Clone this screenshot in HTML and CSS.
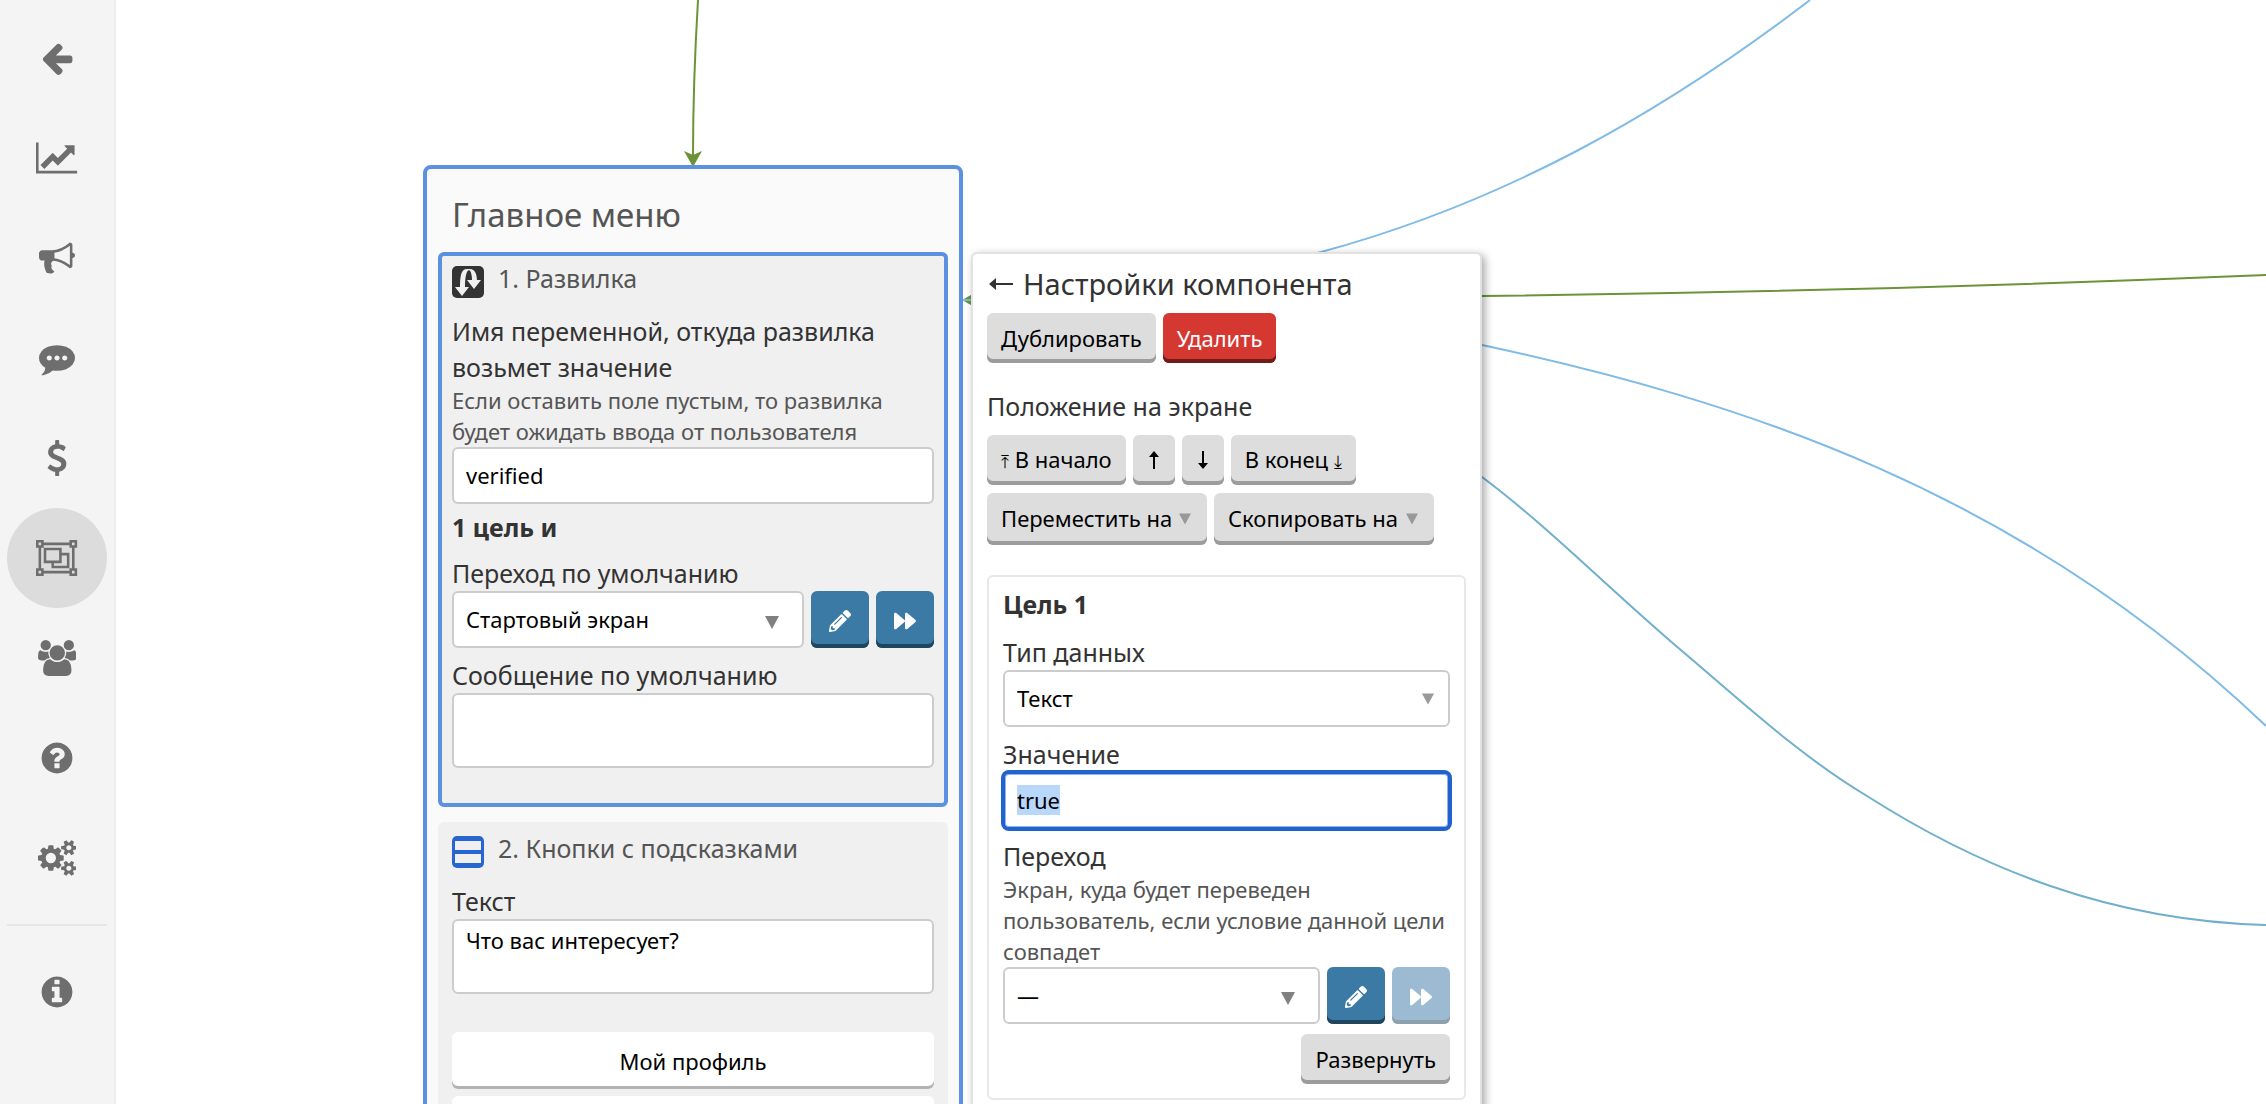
FILE: index.html
```html
<!DOCTYPE html>
<html lang="ru">
<head>
<meta charset="utf-8">
<meta name="viewport" content="width=device-width, initial-scale=1">
<title>Редактор экранов</title>
<link rel="stylesheet" href="styles.css">
</head>
<body>
<svg class="symbols" aria-hidden="true">
  <symbol id="pencil" viewBox="0 0 512 512"><path d="M497.9 142.1l-46.1 46.1c-4.7 4.7-12.3 4.7-17 0l-111-111c-4.7-4.7-4.7-12.3 0-17l46.1-46.1c18.7-18.7 49.1-18.7 67.9 0l60.1 60.1c18.8 18.7 18.8 49.1 0 67.9zM284.2 99.8L21.6 362.4.4 483.9c-2.9 16.4 11.4 30.6 27.8 27.8l121.5-21.3 262.6-262.6c4.7-4.7 4.7-12.3 0-17l-111-111c-4.8-4.7-12.4-4.7-17.1 0zM124.1 339.9c-5.5-5.5-5.5-14.3 0-19.8l154-154c5.5-5.5 14.3-5.5 19.8 0s5.5 14.3 0 19.8l-154 154c-5.5 5.5-14.3 5.5-19.8 0zM88 424h48v36.3l-64.5 11.3-31.1-31.1L51.7 376H88v48z"/></symbol>
  <symbol id="forward" viewBox="0 0 512 512"><path d="M500.5 231.4l-192-160C287.9 54.3 256 68.6 256 96v320c0 27.4 31.9 41.8 52.5 24.6l192-160c15.3-12.8 15.3-36.4 0-49.2zm-256 0l-192-160C31.9 54.3 0 68.6 0 96v320c0 27.4 31.9 41.8 52.5 24.6l192-160c15.3-12.8 15.3-36.4 0-49.2z"/></symbol>
  <symbol id="caret" viewBox="0 0 14 13"><path d="M0 0h14L7 13z"/></symbol>
</svg>
<div class="app">
  <nav class="sidebar" aria-label="Разделы">
    <a class="nav-item" href="#back" aria-label="Назад"><svg viewBox="0 0 1792 1792"><path d="M1664 896v128q0 53-32.5 90.5t-84.5 37.5h-704l293 294q38 36 38 90t-38 90l-75 76q-37 37-90 37-52 0-91-37l-651-652q-37-37-37-90 0-52 37-91l651-650q38-38 91-38 52 0 90 38l75 74q38 38 38 91t-38 91l-293 293h704q52 0 84.5 37.5t32.5 90.5z"/></svg></a>
    <a class="nav-item" href="#stats" aria-label="Статистика"><svg viewBox="0 0 2048 1792"><path d="M2048 1536v128h-2048v-1536h128v1408h1920zm-128-1248v435q0 21-19.5 29.5t-35.5-7.5l-121-121-633 633q-10 10-23 10t-23-10l-233-233-416 416-192-192 585-585q10-10 23-10t23 10l233 233 464-464-121-121q-16-16-7.5-35.5t29.5-19.5h435q14 0 23 9t9 23z"/></svg></a>
    <a class="nav-item" href="#mailings" aria-label="Рассылки"><svg viewBox="0 0 1792 1792"><path d="M1664 640q53 0 90.5 37.5t37.5 90.5-37.5 90.5-90.5 37.5v384q0 52-38 90t-90 38q-417-347-812-380-58 19-91 66t-31 100.5 40 92.5q-20 33-23 65.5t6 58 33.5 55 48 50 61.5 50.5q-29 58-111.5 83t-168.5 11.5-132-55.5q-7-23-29.5-87.5t-32-94.5-23-89-15-101 3.5-98.5 22-110.5h-122q-66 0-113-47t-47-113v-192q0-66 47-113t113-47h480q435 0 896-384 52 0 90 38t38 90v384zm-128 604v-954q-394 302-768 343v270q377 42 768 341z"/></svg></a>
    <a class="nav-item" href="#chats" aria-label="Чаты"><svg viewBox="0 0 1792 1792"><path d="M640 896q0-53-37.5-90.5t-90.5-37.5-90.5 37.5-37.5 90.5 37.5 90.5 90.5 37.5 90.5-37.5 37.5-90.5zm384 0q0-53-37.5-90.5t-90.5-37.5-90.5 37.5-37.5 90.5 37.5 90.5 90.5 37.5 90.5-37.5 37.5-90.5zm384 0q0-53-37.5-90.5t-90.5-37.5-90.5 37.5-37.5 90.5 37.5 90.5 90.5 37.5 90.5-37.5 37.5-90.5zm384 0q0 174-120 321.5t-326 233-450 85.5q-110 0-211-18-173 173-435 229-52 10-86 13-12 1-22-6t-13-18q-4-15 20-37 5-5 23.5-21.5t25.5-23.5 23.5-25.5 24-31.5 20.5-37 20-48 14.5-57.5 12.5-72.5q-146-90-229.5-216.5t-83.5-269.5q0-174 120-321.5t326-233 450-85.5 450 85.5 326 233 120 321.5z"/></svg></a>
    <a class="nav-item" href="#payments" aria-label="Платежи"><svg viewBox="0 0 1792 1792"><path d="M1362 1185q0 153-99.5 263.5t-258.5 136.5v175q0 14-9 23t-23 9h-135q-13 0-22.5-9.5t-9.5-22.5v-175q-66-9-127.5-31t-101.5-44.5-74-48-46.5-37.5-17.5-18q-17-21-2-41l103-135q7-10 23-12 15-2 24 9l2 2q113 99 243 125 37 8 74 8 81 0 142.5-43t61.5-122q0-28-15-53t-33.5-42-58.5-37.5-66-32-80-32.5q-39-16-61.5-25t-61.5-26.5-62.5-31-56.5-35.5-53.5-42.5-43.5-49-35.5-58-21-66.5-8.5-78q0-138 98-242t255-134v-180q0-13 9.5-22.5t22.5-9.5h135q14 0 23 9t9 23v176q57 6 110.5 23t87 33.5 63.5 37.5 39 29 15 14q17 18 5 38l-81 146q-8 15-23 16-14 3-27-7-3-3-14.5-12t-39-26.5-58.5-32-74.5-26-85.5-11.5q-95 0-155 43t-60 111q0 26 8.5 48t29.5 41.5 39.5 33 56 31 60.5 27 70 27.5q53 20 81 31.5t76 35 75.5 42.5 62 50 53 63.5 31.5 76.5 13 94z"/></svg></a>
    <a class="nav-item nav-item--active" href="#screens" aria-label="Экраны" aria-current="page"><svg viewBox="0 0 2048 1792"><path fill-rule="evenodd" d="M2048 384h-128v1024h128v384h-384v-128h-1280v128h-384v-384h128v-1024h-128v-384h384v128h1280v-128h384zM1792 128v128h128v-128zM128 128v128h128v-128zM256 1664v-128h-128v128zM1664 1536v-128h128v-1024h-128v-128h-1280v128h-128v1024h128v128zM1920 1664v-128h-128v128zM1280 640h384v768h-896v-256h-384v-768h896zM512 1024h640v-512h-640zM1536 1280v-512h-256v384h-384v128z"/></svg></a>
    <a class="nav-item" href="#users" aria-label="Пользователи"><svg viewBox="0 0 1920 1792"><path d="M593 896q-162 5-265 128h-134q-82 0-138-40.5t-56-118.5q0-353 124-353 6 0 43.5 21t97.5 42.5 119 21.5q67 0 133-23-5 37-5 66 0 139 81 256zm1071 637q0 120-73 189.5t-194 69.5h-874q-121 0-194-69.5t-73-189.5q0-53 3.5-103.5t14-109 26.5-108.5 43-97.5 62-81 85.5-53.5 111.5-20q10 0 43 21.5t73 48 107 48 135 21.5 135-21.5 107-48 73-48 43-21.5q61 0 111.5 20t85.5 53.5 62 81 43 97.5 26.5 108.5 14 109 3.5 103.5zm-1024-1277q0 106-75 181t-181 75-181-75-75-181 75-181 181-75 181 75 75 181zm704 384q0 159-112.5 271.5t-271.5 112.5-271.5-112.5-112.5-271.5 112.5-271.5 271.5-112.5 271.5 112.5 112.5 271.5zm576 225q0 78-56 118.5t-138 40.5h-134q-103-123-265-128 81-117 81-256 0-29-5-66 66 23 133 23 59 0 119-21.5t97.5-42.5 43.5-21q124 0 124 353zm-128-609q0 106-75 181t-181 75-181-75-75-181 75-181 181-75 181 75 75 181z"/></svg></a>
    <a class="nav-item" href="#help" aria-label="Помощь"><svg viewBox="0 0 1792 1792"><path d="M1024 1376v-192q0-14-9-23t-23-9h-192q-14 0-23 9t-9 23v192q0 14 9 23t23 9h192q14 0 23-9t9-23zm256-672q0-88-55.5-163t-138.5-116-170-41q-243 0-371 213-15 24 8 42l132 100q7 6 19 6 16 0 25-12 53-68 86-92 34-24 86-24 48 0 85.5 26t37.5 59q0 38-20 61t-68 45q-63 28-115.5 86.5t-52.5 125.5v36q0 14 9 23t23 9h192q14 0 23-9t9-23q0-19 21.5-49.5t54.5-49.5q32-18 49-28.5t46-35 44.5-48 28-60.5 12.5-81zm384 192q0 209-103 385.5t-279.5 279.5-385.5 103-385.5-103-279.5-279.5-103-385.5 103-385.5 279.5-279.5 385.5-103 385.5 103 279.5 279.5 103 385.5z"/></svg></a>
    <a class="nav-item" href="#settings" aria-label="Настройки"><svg viewBox="0 0 1920 1792"><path d="M896 896q0-106-75-181t-181-75-181 75-75 181 75 181 181 75 181-75 75-181zm768 512q0-52-38-90t-90-38-90 38-38 90q0 53 37.5 90.5t90.5 37.5 90.5-37.5 37.5-90.5zm0-1024q0-52-38-90t-90-38-90 38-38 90q0 53 37.5 90.5t90.5 37.5 90.5-37.5 37.5-90.5zm-384 421v185q0 10-7 19.5t-16 10.5l-155 24q-11 35-32 76 34 48 90 115 7 11 7 20 0 12-7 19-23 30-82.5 89.5t-78.5 59.5q-11 0-21-7l-115-90q-37 19-77 31-11 108-23 155-7 24-30 24h-186q-11 0-20-7.5t-10-17.5l-23-153q-34-10-75-31l-118 89q-7 7-20 7-11 0-21-8-144-133-144-160 0-9 7-19 10-14 41-53t47-61q-23-44-35-82l-152-24q-10-1-17-9.5t-7-19.5v-185q0-10 7-19.5t16-10.5l155-24q11-35 32-76-34-48-90-115-7-11-7-20 0-12 7-20 22-30 82-89t79-59q11 0 21 7l115 90q34-18 77-32 11-108 23-154 7-24 30-24h186q11 0 20 7.5t10 17.5l23 153q34 10 75 31l118-89q8-7 20-7 11 0 21 8 144 133 144 160 0 8-7 19-12 16-42 54t-45 60q23 48 34 82l152 23q10 2 17 10.5t7 19.5zm640 533v140q0 16-149 31-12 27-30 52 51 113 51 138 0 4-4 7-122 71-124 71-8 0-46-47t-52-68q-20 2-30 2t-30-2q-14 21-52 68t-46 47q-2 0-124-71-4-3-4-7 0-25 51-138-18-25-30-52-149-15-149-31v-140q0-16 149-31 13-29 30-52-51-113-51-138 0-4 4-7 4-2 35-20t59-34 30-16q8 0 46 46.5t52 67.5q20-2 30-2t30 2q51-71 92-112l6-2q4 0 124 70 4 3 4 7 0 25-51 138 17 23 30 52 149 15 149 31zm0-1024v140q0 16-149 31-12 27-30 52 51 113 51 138 0 4-4 7-122 71-124 71-8 0-46-47t-52-68q-20 2-30 2t-30-2q-14 21-52 68t-46 47q-2 0-124-71-4-3-4-7 0-25 51-138-18-25-30-52-149-15-149-31v-140q0-16 149-31 13-29 30-52-51-113-51-138 0-4 4-7 4-2 35-20t59-34 30-16q8 0 46 46.5t52 67.5q20-2 30-2t30 2q51-71 92-112l6-2q4 0 124 70 4 3 4 7 0 25-51 138 17 23 30 52 149 15 149 31z"/></svg></a>
    <hr class="nav-rule">
    <a class="nav-item" href="#about" aria-label="О сервисе"><svg viewBox="0 0 1792 1792"><path d="M1152 1376v-160q0-14-9-23t-23-9h-96v-512q0-14-9-23t-23-9h-320q-14 0-23 9t-9 23v160q0 14 9 23t23 9h96v320h-96q-14 0-23 9t-9 23v160q0 14 9 23t23 9h448q14 0 23-9t9-23zm-128-896v-160q0-14-9-23t-23-9h-192q-14 0-23 9t-9 23v160q0 14 9 23t23 9h192q14 0 23-9t9-23zm640 416q0 209-103 385.5t-279.5 279.5-385.5 103-385.5-103-279.5-279.5-103-385.5 103-385.5 279.5-279.5 385.5-103 385.5 103 279.5 279.5 103 385.5z"/></svg></a>
  </nav>

  <main class="canvas">
    <svg class="edges" aria-hidden="true">
      <g transform="translate(-116 0)">
        <path class="edge edge--green" d="M698 0C695 50 693 100 693 156"/>
        <path class="edge edge--green" d="M976 300C1150 299 1320 298 1482 296C1750 293 2000 286 2266 275"/>
        <path class="arrow" d="M684 151l9 4 9-4-9 16z"/>
        <path class="arrow" d="M978 291l-4 9 4 9-16-9z"/>
        <path class="edge edge--blue" d="M963 300C1090 300 1210 281 1321 252C1502 203 1660 115 1810 0"/>
        <path class="edge edge--blue" d="M976 300C1150 300 1320 309 1482 345C1742 401 2020 491 2266 726"/>
        <path class="edge edge--teal" d="M976 300C1200 300 1340 370 1482 477C1550 528 1610 590 1682 651C1740 700 1800 756 1867 796C1980 868 2110 921 2266 925"/>
      </g>
    </svg>

    <article class="node">
      <h1 class="node-title">Главное меню</h1>
      <section class="component component--selected">
        <h2 class="component-head">
          <svg class="component-icon" viewBox="0 0 32 32"><rect width="32" height="32" rx="5" fill="#333"/><path d="M8 22C8 10 9 3 15 3h3c5 0 7 5 7 12h-5c0-6-1-10-3-11-3 1-4 8-4 18z" fill="#f0f0f0"/><path d="M3 21h14l-7 9zM15 14h14l-7 9z" fill="#f0f0f0"/></svg>
          1. Развилка
        </h2>
        <label class="label" for="variable">Имя переменной, откуда развилка возьмет значение</label>
        <p class="hint">Если оставить поле пустым, то развилка будет ожидать ввода от пользователя</p>
        <input class="control" id="variable" type="text" value="verified">
        <p class="goals">1 цель и</p>
        <label class="label" for="default-target">Переход по умолчанию</label>
        <div class="target">
          <span class="picker"><select class="control" id="default-target"><option>Стартовый экран</option></select><svg class="caret"><use href="#caret"/></svg></span>
          <button class="icon-button" type="button" aria-label="Изменить"><svg><use href="#pencil"/></svg></button>
          <button class="icon-button" type="button" aria-label="Перейти"><svg><use href="#forward"/></svg></button>
        </div>
        <label class="label label--spaced" for="default-message">Сообщение по умолчанию</label>
        <textarea class="control control--area" id="default-message"></textarea>
      </section>
      <section class="component">
        <h2 class="component-head">
          <svg class="component-icon" viewBox="0 0 32 32"><rect width="32" height="32" rx="5" fill="#2765d0"/><path d="M3 5h26v9H3zM3 18h26v9H3z" fill="#f0f0f0"/></svg>
          2. Кнопки с подсказками
        </h2>
        <label class="label" for="question">Текст</label>
        <textarea class="control control--area" id="question">Что вас интересует?</textarea>
        <div class="replies">
          <button class="reply" type="button">Мой профиль</button>
          <button class="reply" type="button" aria-label="Следующая кнопка"></button>
        </div>
      </section>
    </article>

    <aside class="panel">
      <h2 class="panel-title">
        <button class="panel-back" type="button" aria-label="Назад"><svg viewBox="0 0 24 16"><path d="M0 8l7-6v5h17v2H7v5z"/></svg></button>
        Настройки компонента
      </h2>
      <div class="row">
        <button class="button" type="button">Дублировать</button>
        <button class="button button--danger" type="button">Удалить</button>
      </div>
      <p class="label label--section">Положение на экране</p>
      <div class="row">
        <button class="button" type="button"><span class="glyph">⤒</span> В начало</button>
        <button class="button" type="button" aria-label="Выше"><svg class="move" viewBox="0 0 14 18"><path d="M7 0l5 6H8v12H6V6H2z"/></svg></button>
        <button class="button" type="button" aria-label="Ниже"><svg class="move" viewBox="0 0 14 18"><path d="M7 18l5-6H8V0H6v12H2z"/></svg></button>
        <button class="button" type="button">В конец <span class="glyph">⤓</span></button>
      </div>
      <div class="row row--menus">
        <span class="picker picker--button"><select class="button" aria-label="Переместить на"><option>Переместить на</option></select><svg class="caret caret--small"><use href="#caret"/></svg></span>
        <span class="picker picker--button"><select class="button" aria-label="Скопировать на"><option>Скопировать на</option></select><svg class="caret caret--small"><use href="#caret"/></svg></span>
      </div>
      <section class="goal">
        <h3 class="goal-title">Цель 1</h3>
        <label class="label" for="type">Тип данных</label>
        <span class="picker"><select class="control" id="type"><option>Текст</option></select><svg class="caret caret--small"><use href="#caret"/></svg></span>
        <label class="label label--spaced" for="value">Значение</label>
        <input class="control" id="value" type="text" value="true">
        <label class="label label--spaced" for="target">Переход</label>
        <p class="hint">Экран, куда будет переведен пользователь, если условие данной цели совпадет</p>
        <div class="target">
          <span class="picker"><select class="control" id="target"><option>—</option></select><svg class="caret"><use href="#caret"/></svg></span>
          <button class="icon-button" type="button" aria-label="Изменить"><svg><use href="#pencil"/></svg></button>
          <button class="icon-button" type="button" aria-label="Перейти" disabled><svg><use href="#forward"/></svg></button>
        </div>
        <div class="row row--end">
          <button class="button" type="button">Развернуть</button>
        </div>
      </section>
    </aside>
  </main>
</div>
<script src="app.js"></script>
</body>
</html>
```
FILE: styles.css
```css
*, *::before, *::after { box-sizing: border-box; }

body {
  margin: 0;
  background: #fff;
  color: #333;
  font-family: "Noto Sans", "Open Sans", sans-serif;
  font-size: 25px;
  line-height: 36px;
}

h1, h2, h3, p { margin: 0; font-weight: 400; }

button, input, select, textarea { font: inherit; font-size: 22px; line-height: 30px; color: #000; }

.symbols { display: none; }

.app { display: flex; height: 100vh; overflow: hidden; }

/* Sidebar */
.sidebar {
  flex: none;
  width: 116px;
  padding: 8px 7px;
  background: #f4f4f4;
  border-right: 2px solid #ededed;
}
.nav-item {
  display: flex;
  align-items: center;
  justify-content: center;
  width: 100px;
  height: 100px;
  border-radius: 50%;
}
.nav-item svg { height: 36px; fill: #6e6e6e; }
.nav-item--active { background: #dcdcdc; }
.nav-rule { width: 100px; height: 2px; margin: 16px 0; border: 0; background: #e6e6e6; }

/* Canvas */
.canvas { position: relative; flex: 1; overflow: hidden; }
.edges { position: absolute; inset: 0; width: 100%; height: 100%; }
.edge { fill: none; stroke-width: 2; }
.edge--green { stroke: #6b9438; }
.edge--blue { stroke: #7fbbe6; }
.edge--teal { stroke: #70b0cc; }
.arrow { fill: #6b9438; }

/* Screen node */
.node {
  position: absolute;
  left: 307px;
  top: 165px;
  width: 540px;
  padding: 0 11px 20px;
  background: #fafafa;
  border: 4px solid #5a91e0;
  border-radius: 8px;
}
.node-title { padding: 23px 14px 14px; font-size: 33px; line-height: 46px; color: #555; }

.component {
  margin-bottom: 15px;
  padding: 10px 10px 35px;
  background: #f0f0f0;
  border: 4px solid #f0f0f0;
  border-radius: 6px;
}
.component--selected { border-color: #5a91e0; }
.component-head {
  display: flex;
  gap: 14px;
  margin-bottom: 15px;
  font-size: 25px;
  line-height: 25px;
  color: #555;
}
.component-icon { flex: none; width: 32px; height: 32px; }

.label { display: block; }
.label--spaced { margin-top: 9px; }
.hint { font-size: 22px; line-height: 31px; color: #555; }
.goals { margin: 5px 0 10px; font-weight: 700; }

.control {
  display: block;
  width: 100%;
  height: 57px;
  padding: 0 12px 2px;
  background: #fff;
  border: 2px solid #ccc;
  border-radius: 6px;
  appearance: none;
}
.control:focus {
  outline: none;
  border-color: #2162cc;
  box-shadow: 0 0 0 2px #2162cc, inset 0 0 0 1px #8db2ec;
}
.control::selection { background: #b9d6fb; color: #000; }
.control--area { height: 75px; padding: 4px 12px; resize: none; }

.picker { display: grid; align-items: center; }
.picker > * { grid-area: 1 / 1; }
.caret { justify-self: end; width: 14px; height: 13px; margin: 5px 25px 0 0; fill: #808080; pointer-events: none; }
.caret--small { width: 12px; height: 12px; margin: 0 16px 0 0; fill: #999; }

.target { display: flex; gap: 7px; }
.target .picker { flex: 1; }

.icon-button {
  display: flex;
  flex: none;
  align-items: center;
  justify-content: center;
  width: 58px;
  height: 57px;
  padding: 3px 0 0;
  background: #3c7aa6;
  border: 0;
  border-radius: 6px;
  box-shadow: inset 0 -4px #20455f;
}
.icon-button svg { width: 22px; height: 22px; fill: #fff; }
.icon-button:disabled { opacity: .5; }

.replies { display: grid; gap: 7px; margin-top: 38px; }
.reply { height: 57px; padding: 0; background: #fff; border: 0; border-radius: 6px; box-shadow: inset 0 -3px #b3b3b3; }

/* Settings panel */
.panel {
  position: absolute;
  left: 855px;
  top: 252px;
  width: 511px;
  padding: 10px 14px 20px;
  background: #fff;
  border: 2px solid #e2e2e2;
  border-radius: 6px;
  box-shadow: 3px 3px 9px rgba(0, 0, 0, .35);
}
.panel-title { display: flex; align-items: center; gap: 10px; margin-bottom: 9px; font-size: 29px; line-height: 40px; }
.panel-back { display: flex; padding: 0 0 0 2px; background: none; border: 0; }
.panel-back svg { width: 24px; height: 16px; fill: #333; }

.label--section { margin: 25px 0 11px; }
.row { display: flex; gap: 7px; }
.row--menus { margin-top: 8px; }
.row--end { justify-content: flex-end; margin-top: 10px; }

.button {
  height: 50px;
  padding: 0 14px;
  background: #ddd;
  border: 0;
  border-radius: 6px;
  box-shadow: inset 0 -4px #9c9c9c;
  appearance: none;
}
.button--danger { background: #d43831; color: #fff; box-shadow: inset 0 -4px #701c19; }
.glyph { font-size: 18px; }
.move { display: block; width: 14px; height: 18px; }
.picker--button .button { width: 220px; height: 52px; padding-bottom: 2px; }

.goal {
  margin-top: 30px;
  padding: 9px 14px 14px;
  border: 2px solid #e8e8e8;
  border-radius: 6px;
}
.goal-title { margin-bottom: 12px; font-size: 25px; font-weight: 700; }
```
FILE: app.js
```js
// The value of a freshly opened goal is ready to be typed over.
const value = document.getElementById("value");
value.focus({ preventScroll: true });
value.select();
```
